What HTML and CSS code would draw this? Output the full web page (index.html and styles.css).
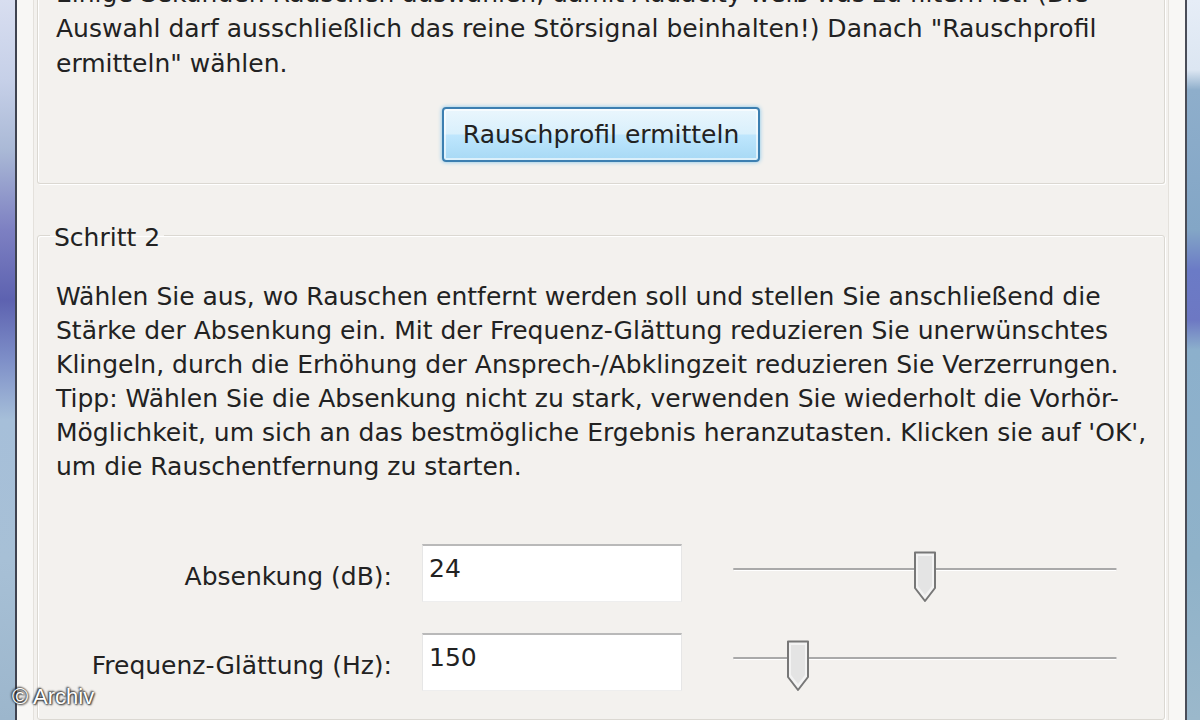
FILE: index.html
```html
<!DOCTYPE html>
<html lang="de">
<head>
<meta charset="utf-8">
<title>Rauschentfernung</title>
<link rel="stylesheet" href="styles.css">
</head>
<body>
<div class="screen">
  <div class="frame frame-left"></div>
  <div class="dialog">
    <div class="inner">
      <section class="group group-one">
        <p class="text">Einige Sekunden Rauschen auswählen, damit Audacity weiß was zu filtern ist. (Die<br>Auswahl darf ausschließlich das reine Störsignal beinhalten!) Danach "Rauschprofil<br>ermitteln" wählen.</p>
        <div class="btn-row"><button class="btn">Rauschprofil ermitteln</button></div>
      </section>
      <fieldset class="group group-two">
        <legend class="legend">Schritt 2</legend>
        <p class="text text-two">Wählen Sie aus, wo Rauschen entfernt werden soll und stellen Sie anschließend die<br>Stärke der Absenkung ein. Mit der Frequenz-Glättung reduzieren Sie unerwünschtes<br>Klingeln, durch die Erhöhung der Ansprech-/Abklingzeit reduzieren Sie Verzerrungen.<br>Tipp: Wählen Sie die Absenkung nicht zu stark, verwenden Sie wiederholt die Vorhör-<br>Möglichkeit, um sich an das bestmögliche Ergebnis heranzutasten. Klicken sie auf 'OK',<br>um die Rauschentfernung zu starten.</p>
        <div class="rows">
          <div class="row">
            <span class="label">Absenkung (dB):</span>
            <div class="field">24</div>
            <div class="slider">
              <span class="track"></span>
              <svg class="thumb" style="left:179px" width="26" height="54" viewBox="0 0 26 54"><path d="M3 2.5 H23 V38 L13 51 L3 38 Z" fill="#f3f3f3" stroke="#777" stroke-width="2" stroke-linejoin="round"/><path d="M6 6 H20 V36 L13 45 L6 36 Z" fill="#e4e4e4"/></svg>
            </div>
          </div>
          <div class="row">
            <span class="label">Frequenz-Glättung (Hz):</span>
            <div class="field">150</div>
            <div class="slider">
              <span class="track"></span>
              <svg class="thumb" style="left:52px" width="26" height="54" viewBox="0 0 26 54"><path d="M3 2.5 H23 V38 L13 51 L3 38 Z" fill="#f3f3f3" stroke="#777" stroke-width="2" stroke-linejoin="round"/><path d="M6 6 H20 V36 L13 45 L6 36 Z" fill="#e4e4e4"/></svg>
            </div>
          </div>
        </div>
      </fieldset>
    </div>
  </div>
  <div class="frame frame-right"></div>
  <div class="watermark">© Archiv</div>
</div>
</body>
</html>
```
FILE: styles.css
```css
html, body {
  margin: 0;
  padding: 0;
}
body {
  width: 1200px;
  height: 720px;
  overflow: hidden;
  background: #f3f1ee;
  font-family: "DejaVu Sans", sans-serif;
  color: #222222;
}
.screen {
  position: relative;
  display: flex;
  width: 1200px;
  height: 720px;
  overflow: hidden;
}
.frame {
  flex: none;
}
.frame-left {
  width: 15px;
  border-right: 2px solid #3f4350;
  background: linear-gradient(180deg, #d8def0 0px, #c6d0e8 80px, #aab9d6 150px, #7d80c2 230px, #5d62b0 300px, #7e8fc8 360px, #a6bfd9 420px, #a7c0d6 560px, #9cb6cc 720px);
}
.frame-right {
  width: 16px;
  border-left: 2px solid #4a4d58;
  background: linear-gradient(180deg, #e6edf7 0px, #dce6f2 70px, #8eaecb 90px, #83a6c6 230px, #6b7bc6 270px, #6d78c3 320px, #8cb0cc 350px, #8fb2c9 560px, #9bb8cb 720px);
}
.dialog {
  flex: 1;
  display: flex;
  background: #f8f7f5;
  padding: 0 16px;
}
.inner {
  flex: 1;
  display: flex;
  flex-direction: column;
  background: #f3f1ee;
  border-left: 1px solid #e4e1dc;
  border-right: 1px solid #e4e1dc;
  padding: 0 3px;
}
.group {
  border: 1px solid #dbd8d2;
  box-shadow: 1px 1px 0 #ffffff, inset 1px 1px 0 #ffffff;
  border-radius: 3px;
}
.group-one {
  margin-top: -24px;
  height: 208px;
  box-sizing: border-box;
  padding: 0 18px;
  border-top: none;
}
.text {
  margin: 0;
  font-size: 25px;
  line-height: 35px;
  white-space: nowrap;
}
.btn-row {
  display: flex;
  justify-content: center;
  margin-top: 26px;
}
.btn {
  width: 318px;
  height: 55px;
  margin-left: 0;
  font-family: inherit;
  font-size: 25px;
  color: #222222;
  border: 2px solid #3c7fb1;
  border-radius: 4px;
  background: linear-gradient(180deg, #eaf6fd 0%, #d9f0fc 48%, #bee6fd 52%, #a7d9f5 100%);
  box-shadow: 0 0 4px #7fc4ea, inset 0 0 0 2px rgba(255,255,255,0.6);
  padding: 0;
}
.group-two {
  margin: 36px 0 0 0;
  padding: 30px 18px 0 18px;
  min-width: 0;
  flex: 1;
}
.legend {
  font-size: 25px;
  line-height: 30px;
  padding: 0 4px;
  margin-left: -6px;
  position: relative;
  top: 3px;
  color: #222222;
}
.text-two {
  line-height: 34px;
}
.rows {
  display: flex;
  flex-direction: column;
  gap: 31px;
  margin-top: 60px;
}
.row {
  display: flex;
  align-items: center;
  height: 58px;
}
.label {
  width: 336px;
  text-align: right;
  font-size: 25px;
  flex: none;
  position: relative;
  top: 3px;
}
.field {
  flex: none;
  width: 260px;
  height: 58px;
  margin-left: 30px;
  background: #ffffff;
  border-top: 2px solid #b9b9b9;
  border-left: 1px solid #e6e6e6;
  border-right: 1px solid #e6e6e6;
  border-bottom: 1px solid #eeeeee;
  box-sizing: border-box;
  font-size: 25px;
  padding: 8px 0 0 6px;
}
.slider {
  position: relative;
  flex: none;
  width: 384px;
  height: 58px;
  margin-left: 51px;
}
.track {
  position: absolute;
  left: 0;
  right: 0;
  top: 24px;
  height: 2px;
  background: #a9a9a9;
  border-left: 1px solid #bdbdbd;
  border-right: 1px solid #d0d0d0;
}
.track::before {
  content: "";
  position: absolute;
  left: 0;
  right: 0;
  top: 2px;
  height: 1px;
  background: #ffffff;
}
.thumb {
  position: absolute;
  top: 6px;
}
.watermark {
  position: absolute;
  left: 12px;
  top: 684px;
  font-family: "Liberation Sans", Arial, sans-serif;
  font-size: 22px;
  color: #ffffff;
  text-shadow: 0 0 2px #222, 1px 1px 2px #333, -1px -1px 2px #333;
}
```
